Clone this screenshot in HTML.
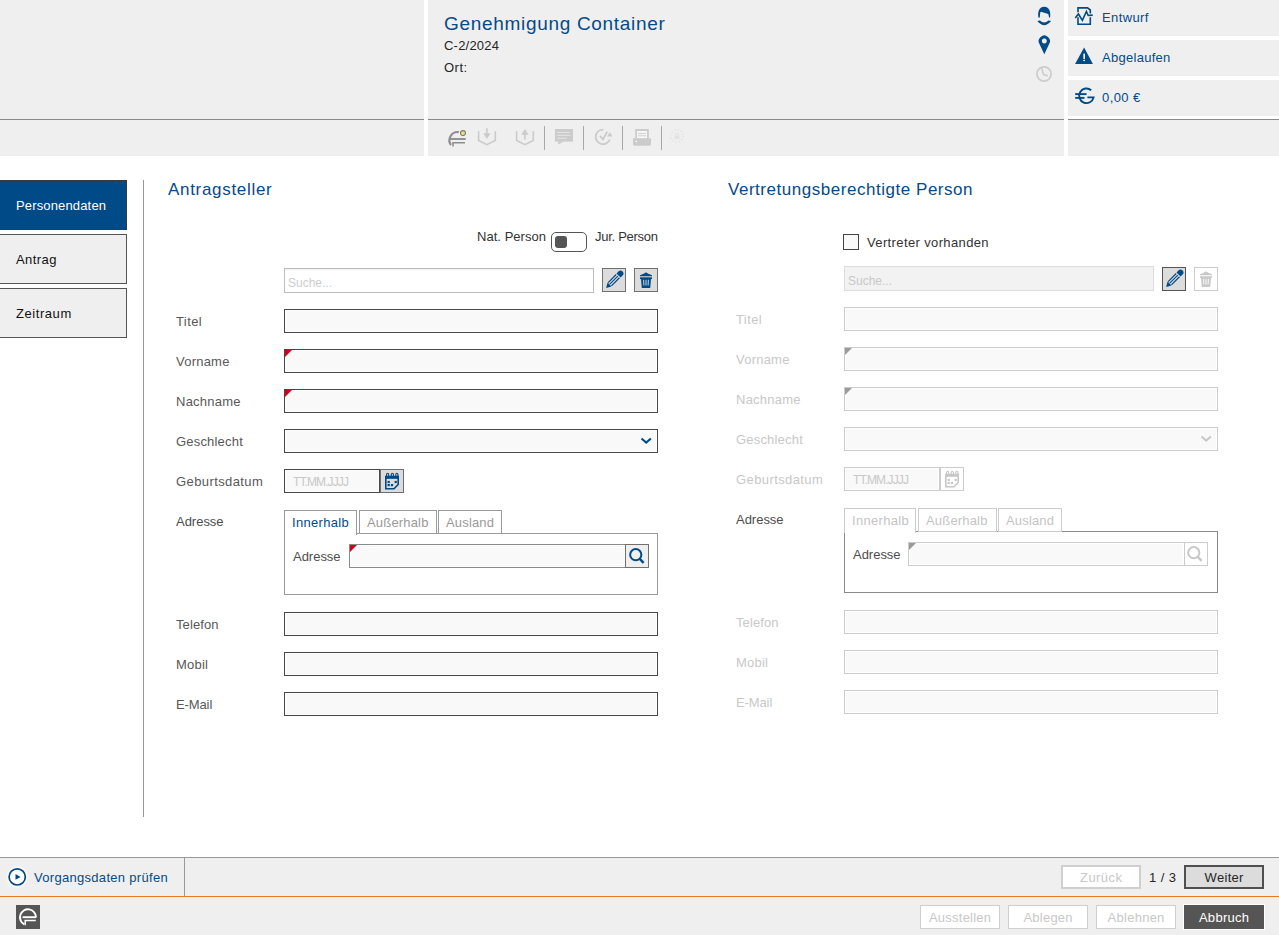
<!DOCTYPE html>
<html><head><meta charset="utf-8"><title>Genehmigung Container</title>
<style>
html,body{margin:0;padding:0;background:#fff;width:1279px;height:935px;overflow:hidden;position:relative;font-family:"Liberation Sans",sans-serif;}
.t{position:absolute;white-space:nowrap;}
.r{position:absolute;}
svg{position:absolute;overflow:visible}
</style></head><body>
<div class="r" style="left:0px;top:0px;width:424px;height:156px;background:#efefef"></div>
<div class="r" style="left:428px;top:0px;width:636px;height:156px;background:#efefef"></div>
<div class="r" style="left:1068px;top:0px;width:211px;height:36px;background:#efefef"></div>
<div class="r" style="left:1068px;top:40px;width:211px;height:36px;background:#efefef"></div>
<div class="r" style="left:1068px;top:80px;width:211px;height:36px;background:#efefef"></div>
<div class="r" style="left:1068px;top:120px;width:211px;height:36px;background:#efefef"></div>
<div class="r" style="left:0px;top:119px;width:424px;height:1px;background:#8a8a8a"></div>
<div class="r" style="left:428px;top:119px;width:636px;height:1px;background:#8a8a8a"></div>
<div class="r" style="left:1068px;top:119px;width:211px;height:1px;background:#8a8a8a"></div>
<div class="t" style="left:444px;top:13.92px;font-size:19px;line-height:19px;letter-spacing:0.691px;color:#054a89;">Genehmigung Container</div>
<div class="t" style="left:444px;top:39.00px;font-size:13px;line-height:13px;letter-spacing:0.208px;color:#262626;">C-2/2024</div>
<div class="t" style="left:444px;top:61.00px;font-size:13px;line-height:13px;letter-spacing:0.495px;color:#262626;">Ort:</div>
<div class="t" style="left:1102px;top:11.00px;font-size:13px;line-height:13px;letter-spacing:0.398px;color:#054a89;">Entwurf</div>
<div class="t" style="left:1102px;top:51.00px;font-size:13px;line-height:13px;letter-spacing:0.283px;color:#054a89;">Abgelaufen</div>
<div class="t" style="left:1102px;top:91.00px;font-size:13px;line-height:13px;letter-spacing:0.406px;color:#054a89;">0,00 €</div>
<div class="r" style="left:544px;top:126px;width:1px;height:24px;background:#a8a8a8"></div>
<div class="r" style="left:583px;top:126px;width:1px;height:24px;background:#a8a8a8"></div>
<div class="r" style="left:622px;top:126px;width:1px;height:24px;background:#a8a8a8"></div>
<div class="r" style="left:661px;top:126px;width:1px;height:24px;background:#a8a8a8"></div>
<div class="r" style="left:-1px;top:180px;width:128px;height:50px;background:#004a87;border:1px solid #3a3a3a;box-sizing:border-box"></div>
<div class="t" style="left:16px;top:199.00px;font-size:13px;line-height:13px;letter-spacing:0.151px;color:#ffffff;">Personendaten</div>
<div class="r" style="left:-1px;top:234px;width:128px;height:50px;background:#efefef;border:1px solid #555;box-sizing:border-box"></div>
<div class="t" style="left:16px;top:253.00px;font-size:13px;line-height:13px;letter-spacing:0.425px;color:#111;">Antrag</div>
<div class="r" style="left:-1px;top:288px;width:128px;height:50px;background:#efefef;border:1px solid #555;box-sizing:border-box"></div>
<div class="t" style="left:16px;top:307.00px;font-size:13px;line-height:13px;letter-spacing:0.562px;color:#111;">Zeitraum</div>
<div class="r" style="left:143px;top:180px;width:1px;height:637px;background:#999"></div>
<div class="t" style="left:168px;top:180.61px;font-size:17px;line-height:17px;letter-spacing:0.691px;color:#054a89;">Antragsteller</div>
<div class="t" style="left:728px;top:180.61px;font-size:17px;line-height:17px;letter-spacing:0.532px;color:#054a89;">Vertretungsberechtigte Person</div>
<div class="t" style="left:176px;top:315.00px;font-size:13px;line-height:13px;letter-spacing:0.406px;color:#585858;">Titel</div>
<div class="t" style="left:176px;top:355.00px;font-size:13px;line-height:13px;letter-spacing:0.224px;color:#585858;">Vorname</div>
<div class="t" style="left:176px;top:395.00px;font-size:13px;line-height:13px;letter-spacing:0.243px;color:#585858;">Nachname</div>
<div class="t" style="left:176px;top:435.00px;font-size:13px;line-height:13px;letter-spacing:0.191px;color:#585858;">Geschlecht</div>
<div class="t" style="left:176px;top:475.00px;font-size:13px;line-height:13px;letter-spacing:0.401px;color:#585858;">Geburtsdatum</div>
<div class="t" style="left:176px;top:618.00px;font-size:13px;line-height:13px;letter-spacing:0.107px;color:#585858;">Telefon</div>
<div class="t" style="left:176px;top:658.00px;font-size:13px;line-height:13px;letter-spacing:0.227px;color:#585858;">Mobil</div>
<div class="t" style="left:176px;top:698.00px;font-size:13px;line-height:13px;letter-spacing:-0.113px;color:#585858;">E-Mail</div>
<div class="t" style="left:176px;top:515.00px;font-size:13px;line-height:13px;letter-spacing:-0.021px;color:#4d4d4d;">Adresse</div>
<div class="r" style="left:284px;top:309px;width:374px;height:24px;background:#f9f9f9;border:1px solid #474747;box-sizing:border-box;box-shadow:inset 0 0 0 1px #fff"></div>
<div class="r" style="left:284px;top:349px;width:374px;height:24px;background:#f9f9f9;border:1px solid #474747;box-sizing:border-box;box-shadow:inset 0 0 0 1px #fff"></div>
<div class="r" style="left:284px;top:389px;width:374px;height:24px;background:#f9f9f9;border:1px solid #474747;box-sizing:border-box;box-shadow:inset 0 0 0 1px #fff"></div>
<div class="r" style="left:284px;top:429px;width:374px;height:24px;background:#f9f9f9;border:1px solid #474747;box-sizing:border-box;box-shadow:inset 0 0 0 1px #fff"></div>
<div class="r" style="left:284px;top:612px;width:374px;height:24px;background:#f9f9f9;border:1px solid #474747;box-sizing:border-box;box-shadow:inset 0 0 0 1px #fff"></div>
<div class="r" style="left:284px;top:652px;width:374px;height:24px;background:#f9f9f9;border:1px solid #474747;box-sizing:border-box;box-shadow:inset 0 0 0 1px #fff"></div>
<div class="r" style="left:284px;top:692px;width:374px;height:24px;background:#f9f9f9;border:1px solid #474747;box-sizing:border-box;box-shadow:inset 0 0 0 1px #fff"></div>
<div class="r" style="left:285px;top:350px;width:0;height:0;border-top:7px solid #d0021b;border-right:7px solid transparent"></div>
<div class="r" style="left:285px;top:390px;width:0;height:0;border-top:7px solid #d0021b;border-right:7px solid transparent"></div>
<div class="r" style="left:284px;top:469px;width:96px;height:24px;background:#f9f9f9;border:1px solid #474747;box-sizing:border-box;box-shadow:inset 0 0 0 1px #fff"></div>
<div class="t" style="left:293px;top:475.84px;font-size:12px;line-height:12px;color:#c8c8c8"><span style="letter-spacing:-0.9px">TT.MM.JJJJ</span></div>
<div class="r" style="left:380px;top:469px;width:24px;height:24px;background:#dcdcdc;border:1px solid #6e6e6e;box-sizing:border-box"></div>
<div class="r" style="left:284px;top:533px;width:374px;height:62px;border:1px solid #9a9a9a;box-sizing:border-box;background:#fff"></div>
<div class="r" style="left:284px;top:510px;width:73px;height:25px;border:1px solid #9a9a9a;border-bottom:none;box-sizing:border-box;background:#fff"></div>
<div class="r" style="left:359px;top:510px;width:78px;height:24px;border:1px solid #9a9a9a;box-sizing:border-box;background:#fff"></div>
<div class="r" style="left:438px;top:510px;width:64px;height:24px;border:1px solid #9a9a9a;box-sizing:border-box;background:#fff"></div>
<div class="t" style="left:292px;top:516.00px;font-size:13px;line-height:13px;letter-spacing:0.322px;color:#054a89;">Innerhalb</div>
<div class="t" style="left:367px;top:516.00px;font-size:13px;line-height:13px;letter-spacing:0.178px;color:#9a9a9a;">Außerhalb</div>
<div class="t" style="left:446px;top:516.00px;font-size:13px;line-height:13px;letter-spacing:0.164px;color:#9a9a9a;">Ausland</div>
<div class="t" style="left:293px;top:550.00px;font-size:13px;line-height:13px;letter-spacing:-0.021px;color:#4d4d4d;">Adresse</div>
<div class="r" style="left:349px;top:544px;width:277px;height:24px;background:#f9f9f9;border:1px solid #8a8a8a;box-sizing:border-box;box-shadow:inset 0 0 0 1px #fff"></div>
<div class="r" style="left:350px;top:545px;width:0;height:0;border-top:7px solid #d0021b;border-right:7px solid transparent"></div>
<div class="r" style="left:625px;top:544px;width:24px;height:24px;background:#efefef;border:1px solid #707070;box-sizing:border-box"></div>
<div class="t" style="left:736px;top:313.00px;font-size:13px;line-height:13px;letter-spacing:0.406px;color:#c8c8c8;">Titel</div>
<div class="t" style="left:736px;top:353.00px;font-size:13px;line-height:13px;letter-spacing:0.224px;color:#c8c8c8;">Vorname</div>
<div class="t" style="left:736px;top:393.00px;font-size:13px;line-height:13px;letter-spacing:0.243px;color:#c8c8c8;">Nachname</div>
<div class="t" style="left:736px;top:433.00px;font-size:13px;line-height:13px;letter-spacing:0.191px;color:#c8c8c8;">Geschlecht</div>
<div class="t" style="left:736px;top:473.00px;font-size:13px;line-height:13px;letter-spacing:0.401px;color:#c8c8c8;">Geburtsdatum</div>
<div class="t" style="left:736px;top:616.00px;font-size:13px;line-height:13px;letter-spacing:0.107px;color:#c8c8c8;">Telefon</div>
<div class="t" style="left:736px;top:656.00px;font-size:13px;line-height:13px;letter-spacing:0.227px;color:#c8c8c8;">Mobil</div>
<div class="t" style="left:736px;top:696.00px;font-size:13px;line-height:13px;letter-spacing:-0.113px;color:#c8c8c8;">E-Mail</div>
<div class="t" style="left:736px;top:513.00px;font-size:13px;line-height:13px;letter-spacing:-0.021px;color:#4d4d4d;">Adresse</div>
<div class="r" style="left:844px;top:307px;width:374px;height:24px;background:#f9f9f9;border:1px solid #cccccc;box-sizing:border-box;box-shadow:inset 0 0 0 1px #fff"></div>
<div class="r" style="left:844px;top:347px;width:374px;height:24px;background:#f9f9f9;border:1px solid #cccccc;box-sizing:border-box;box-shadow:inset 0 0 0 1px #fff"></div>
<div class="r" style="left:844px;top:387px;width:374px;height:24px;background:#f9f9f9;border:1px solid #cccccc;box-sizing:border-box;box-shadow:inset 0 0 0 1px #fff"></div>
<div class="r" style="left:844px;top:427px;width:374px;height:24px;background:#f9f9f9;border:1px solid #cccccc;box-sizing:border-box;box-shadow:inset 0 0 0 1px #fff"></div>
<div class="r" style="left:844px;top:610px;width:374px;height:24px;background:#f9f9f9;border:1px solid #cccccc;box-sizing:border-box;box-shadow:inset 0 0 0 1px #fff"></div>
<div class="r" style="left:844px;top:650px;width:374px;height:24px;background:#f9f9f9;border:1px solid #cccccc;box-sizing:border-box;box-shadow:inset 0 0 0 1px #fff"></div>
<div class="r" style="left:844px;top:690px;width:374px;height:24px;background:#f9f9f9;border:1px solid #cccccc;box-sizing:border-box;box-shadow:inset 0 0 0 1px #fff"></div>
<div class="r" style="left:845px;top:348px;width:0;height:0;border-top:7px solid #9a9a9a;border-right:7px solid transparent"></div>
<div class="r" style="left:845px;top:388px;width:0;height:0;border-top:7px solid #9a9a9a;border-right:7px solid transparent"></div>
<div class="r" style="left:844px;top:467px;width:96px;height:24px;background:#f9f9f9;border:1px solid #cccccc;box-sizing:border-box;box-shadow:inset 0 0 0 1px #fff"></div>
<div class="t" style="left:853px;top:473.84px;font-size:12px;line-height:12px;color:#c8c8c8"><span style="letter-spacing:-0.9px">TT.MM.JJJJ</span></div>
<div class="r" style="left:940px;top:467px;width:24px;height:24px;background:#fff;border:1px solid #cccccc;box-sizing:border-box"></div>
<div class="r" style="left:844px;top:531px;width:374px;height:62px;border:1px solid #8a8a8a;box-sizing:border-box;background:#fff"></div>
<div class="r" style="left:844px;top:508px;width:72px;height:25px;border:1px solid #cccccc;border-bottom:none;box-sizing:border-box;background:#fff"></div>
<div class="r" style="left:918px;top:508px;width:79px;height:24px;border:1px solid #cccccc;box-sizing:border-box;background:#fff"></div>
<div class="r" style="left:998px;top:508px;width:64px;height:24px;border:1px solid #cccccc;box-sizing:border-box;background:#fff"></div>
<div class="t" style="left:852px;top:514.00px;font-size:13px;line-height:13px;letter-spacing:0.322px;color:#c4c4c4;">Innerhalb</div>
<div class="t" style="left:926px;top:514.00px;font-size:13px;line-height:13px;letter-spacing:0.178px;color:#c4c4c4;">Außerhalb</div>
<div class="t" style="left:1006px;top:514.00px;font-size:13px;line-height:13px;letter-spacing:0.164px;color:#c4c4c4;">Ausland</div>
<div class="t" style="left:853px;top:548.00px;font-size:13px;line-height:13px;letter-spacing:-0.021px;color:#4d4d4d;">Adresse</div>
<div class="r" style="left:908px;top:542px;width:277px;height:24px;background:#f9f9f9;border:1px solid #cccccc;box-sizing:border-box;box-shadow:inset 0 0 0 1px #fff"></div>
<div class="r" style="left:909px;top:543px;width:0;height:0;border-top:7px solid #9a9a9a;border-right:7px solid transparent"></div>
<div class="r" style="left:1184px;top:542px;width:24px;height:24px;background:#fff;border:1px solid #cccccc;box-sizing:border-box"></div>
<div class="t" style="left:477px;top:230.00px;font-size:13px;line-height:13px;letter-spacing:0.036px;color:#333;">Nat. Person</div>
<div class="t" style="left:595px;top:230.00px;font-size:13px;line-height:13px;letter-spacing:-0.280px;color:#333;">Jur. Person</div>
<div class="r" style="left:551px;top:232px;width:36px;height:20px;border:1px solid #555;border-radius:5px;box-sizing:border-box;background:#fff"></div>
<div class="r" style="left:555px;top:236px;width:12px;height:12px;background:#555;border-radius:3px"></div>
<div class="r" style="left:284px;top:268px;width:310px;height:25px;background:#fff;border:1px solid #bdbdbd;box-sizing:border-box;box-shadow:inset 0 2px 2px -1px rgba(0,0,0,0.07)"></div>
<div class="t" style="left:288px;top:276.84px;font-size:12px;line-height:12px;color:#cdcdcd">Suche...</div>
<div class="r" style="left:602px;top:268px;width:24px;height:24px;background:#dcdcdc;border:1px solid #707070;box-sizing:border-box"></div>
<div class="r" style="left:634px;top:268px;width:24px;height:24px;background:#dcdcdc;border:1px solid #707070;box-sizing:border-box"></div>
<div class="r" style="left:843px;top:234px;width:16px;height:16px;border:1px solid #444;box-sizing:border-box;background:#f9f9f9"></div>
<div class="t" style="left:867px;top:236.00px;font-size:13px;line-height:13px;letter-spacing:0.370px;color:#333;">Vertreter vorhanden</div>
<div class="r" style="left:844px;top:266px;width:310px;height:25px;background:#f2f2f2;border:1px solid #dddddd;box-sizing:border-box"></div>
<div class="t" style="left:848px;top:274.84px;font-size:12px;line-height:12px;color:#c8c8c8">Suche...</div>
<div class="r" style="left:1162px;top:267px;width:24px;height:24px;background:#dcdcdc;border:1px solid #555;box-sizing:border-box"></div>
<div class="r" style="left:1194px;top:267px;width:24px;height:24px;background:#fff;border:1px solid #cccccc;box-sizing:border-box"></div>
<div class="r" style="left:0px;top:857px;width:1279px;height:78px;background:#efefef"></div>
<div class="r" style="left:0px;top:857px;width:1279px;height:1px;background:#999"></div>
<div class="r" style="left:0px;top:896px;width:1279px;height:1px;background:#e8782a"></div>
<div class="r" style="left:184px;top:858px;width:1px;height:38px;background:#999"></div>
<div class="t" style="left:34px;top:871.00px;font-size:13px;line-height:13px;letter-spacing:0.301px;color:#054a89;">Vorgangsdaten prüfen</div>
<div class="r" style="left:16px;top:905px;width:24px;height:24px;background:#555"></div>
<div class="r" style="left:1061px;top:865px;width:80px;height:24px;background:#fff;border:2px solid #cfcfcf;box-sizing:border-box"></div>
<div class="t" style="left:1080.04px;top:871.00px;font-size:13px;line-height:13px;letter-spacing:0.438px;color:#c8c8c8;">Zurück</div>
<div class="t" style="left:1149px;top:871.00px;font-size:13px;line-height:13px;letter-spacing:0.414px;color:#262626;">1 / 3</div>
<div class="r" style="left:1184px;top:865px;width:80px;height:24px;background:#dcdcdc;border:2px solid #505050;box-sizing:border-box"></div>
<div class="t" style="left:1204.55px;top:871.00px;font-size:13px;line-height:13px;letter-spacing:0.316px;color:#262626;">Weiter</div>
<div class="r" style="left:920px;top:905px;width:80px;height:24px;background:#fff;border:1px solid #cfcfcf;box-sizing:border-box"></div>
<div class="t" style="left:928.97px;top:911.00px;font-size:13px;line-height:13px;letter-spacing:0.229px;color:#c8c8c8;">Ausstellen</div>
<div class="r" style="left:1008px;top:905px;width:80px;height:24px;background:#fff;border:1px solid #cfcfcf;box-sizing:border-box"></div>
<div class="t" style="left:1023.41px;top:911.00px;font-size:13px;line-height:13px;letter-spacing:0.240px;color:#c8c8c8;">Ablegen</div>
<div class="r" style="left:1096px;top:905px;width:80px;height:24px;background:#fff;border:1px solid #cfcfcf;box-sizing:border-box"></div>
<div class="t" style="left:1107.62px;top:911.00px;font-size:13px;line-height:13px;letter-spacing:0.257px;color:#c8c8c8;">Ablehnen</div>
<div class="r" style="left:1184px;top:905px;width:80px;height:24px;background:#555;box-shadow:0 0 0 1px #fff;box-sizing:border-box"></div>
<div class="t" style="left:1198.9px;top:911.00px;font-size:13px;line-height:13px;letter-spacing:0.294px;color:#ffffff;">Abbruch</div>
<svg width="1279" height="935" style="left:0;top:0" viewBox="0 0 1279 935"><g transform="translate(606.1,287.9) rotate(-45)"><polygon points="0,0 4.8,-2.7 4.8,2.7" fill="#004a87"/><line x1="5.2" y1="-2.3" x2="16.6" y2="-2.3" stroke="#004a87" stroke-width="1.2"/><line x1="5.2" y1="2.3" x2="16.6" y2="2.3" stroke="#004a87" stroke-width="1.2"/><line x1="5.2" y1="0" x2="16.6" y2="0" stroke="#004a87" stroke-width="1.1"/><path d="M17.6,-2.9 H20.4 A2.9,2.9 0 0 1 20.4,2.9 H17.6 Z" fill="#004a87"/></g><g fill="#004a87"><path d="M640,275.3 L644.2,273.6 Q646,271.3 647.8,273.6 L652,275.3 L652,276.2 L640,276.2 Z"/><rect x="640" y="277.3" width="12" height="1.8"/><path d="M641,279 L651,279 L650.2,288 L641.8,288 Z"/></g><g stroke="#e8e8e8" stroke-width="0.9"><line x1="643.6" y1="279.8" x2="643.9" y2="285.5"/><line x1="646" y1="279.8" x2="646" y2="285.5"/><line x1="648.4" y1="279.8" x2="648.1" y2="285.5"/></g><g transform="translate(1166.1,286.9) rotate(-45)"><polygon points="0,0 4.8,-2.7 4.8,2.7" fill="#004a87"/><line x1="5.2" y1="-2.3" x2="16.6" y2="-2.3" stroke="#004a87" stroke-width="1.2"/><line x1="5.2" y1="2.3" x2="16.6" y2="2.3" stroke="#004a87" stroke-width="1.2"/><line x1="5.2" y1="0" x2="16.6" y2="0" stroke="#004a87" stroke-width="1.1"/><path d="M17.6,-2.9 H20.4 A2.9,2.9 0 0 1 20.4,2.9 H17.6 Z" fill="#004a87"/></g><g fill="#c8c8c8"><path d="M1200,274.3 L1204.2,272.6 Q1206,270.3 1207.8,272.6 L1212,274.3 L1212,275.2 L1200,275.2 Z"/><rect x="1200" y="276.3" width="12" height="1.8"/><path d="M1201,278 L1211,278 L1210.2,287 L1201.8,287 Z"/></g><g stroke="#fff" stroke-width="0.9"><line x1="1203.6" y1="278.8" x2="1203.9" y2="284.5"/><line x1="1206" y1="278.8" x2="1206" y2="284.5"/><line x1="1208.4" y1="278.8" x2="1208.1" y2="284.5"/></g><g fill="none" stroke="#004a87" stroke-width="1.6"><path d="M385.8,476.5 H398.2 V484.5 L394,488.7 H385.8 Z"/></g><rect x="385" y="476.2" width="14" height="2.6" fill="#004a87"/><g stroke="#004a87" stroke-width="1.1" fill="none"><rect x="386.6" y="473.3" width="2.1" height="4.6" rx="1.05"/><rect x="391.3" y="473.3" width="2.1" height="4.6" rx="1.05"/><rect x="395.8" y="473.3" width="2.1" height="4.6" rx="1.05"/></g><g fill="#004a87"><rect x="387.6" y="480.9" width="2.2" height="2.2"/><rect x="394.6" y="480.9" width="2.2" height="2.2"/><rect x="387.6" y="484" width="2.2" height="2.2"/><rect x="390.9" y="484" width="2.2" height="2.2"/></g><g fill="none" stroke="#c8c8c8" stroke-width="1.6"><path d="M945.8,474.5 H958.2 V482.5 L954,486.7 H945.8 Z"/></g><rect x="945" y="474.2" width="14" height="2.6" fill="#c8c8c8"/><g stroke="#c8c8c8" stroke-width="1.1" fill="none"><rect x="946.6" y="471.3" width="2.1" height="4.6" rx="1.05"/><rect x="951.3" y="471.3" width="2.1" height="4.6" rx="1.05"/><rect x="955.8" y="471.3" width="2.1" height="4.6" rx="1.05"/></g><g fill="#c8c8c8"><rect x="947.6" y="478.9" width="2.2" height="2.2"/><rect x="954.6" y="478.9" width="2.2" height="2.2"/><rect x="947.6" y="482" width="2.2" height="2.2"/><rect x="950.9" y="482" width="2.2" height="2.2"/></g><circle cx="635.75" cy="554.7" r="5.6" fill="none" stroke="#004a87" stroke-width="2"/><line x1="639.6" y1="558.6" x2="643.6" y2="562.8" stroke="#004a87" stroke-width="2.4"/><circle cx="1193.75" cy="552.7" r="5.6" fill="none" stroke="#c8c8c8" stroke-width="2"/><line x1="1197.6" y1="556.6" x2="1201.6" y2="560.8" stroke="#c8c8c8" stroke-width="2.4"/><polyline points="641.5,438.40000000000003 646.2,442.6 650.9000000000001,438.40000000000003" fill="none" stroke="#004a87" stroke-width="2"/><polyline points="1201.5,436.40000000000003 1206.2,440.6 1210.9,436.40000000000003" fill="none" stroke="#c8c8c8" stroke-width="2"/><path fill="#004a87" d="M1038.4,17.5 C1037.4,11 1039.5,6.8 1044.2,6.8 C1048.9,6.8 1051,11 1050.1,17.5 L1049.1,17.5 L1048.3,13.9 L1041,11.7 L1040.2,12.4 L1039.8,17.5 Z"/><path fill="#004a87" d="M1037.3,20.9 L1039.9,20.5 Q1044.2,24.6 1048.5,20.5 L1051.1,20.9 Q1047,25.2 1044.2,25.2 Q1041.4,25.2 1037.3,20.9 Z"/><path fill="#004a87" fill-rule="evenodd" d="M1044.3,54.2 L1039.6,44.2 A5.6,5.6 0 1 1 1049,44.2 Z M1044.3,38.6 a2.5,2.5 0 1 0 0.01,0 Z"/><circle cx="1044" cy="74" r="7.1" fill="none" stroke="#cdcdcd" stroke-width="1.8"/><polyline points="1041.6,67.5 1043.6,74.6 1047.8,75.8" fill="none" stroke="#cdcdcd" stroke-width="1.6"/><g fill="none" stroke="#004a87" stroke-width="1.6"><path d="M1078,12.2 V7.9 H1087.5 L1090.3,10 V13.6"/><path d="M1078,17.3 V24.3 H1090.3 V17.3"/><polyline points="1075.3,17.9 1078.4,14 1082.4,20.4 1086.4,11.4 1088.2,15.5 1092.7,15.1"/></g><path fill="#004a87" d="M1084.1,47.6 L1092.9,63.9 H1075.1 Z"/><rect x="1083.3" y="53.6" width="1.7" height="5.3" fill="#f0f0f0"/><rect x="1083.3" y="59.8" width="1.7" height="1.3" fill="#f0f0f0"/><g fill="none" stroke="#004a87" stroke-width="1.9"><path d="M1091.2,90.2 A7.3,7.3 0 1 0 1093.6,97.35 H1087.4"/><path d="M1075.2,94.1 H1086.5"/><path d="M1075.2,97.9 H1084.5"/></g><g fill="none" stroke="#8e8e8e"><path d="M1050.3,0" /><path d="M458.8,132.1 A8.2,8.2 0 0 0 451,145" stroke-width="2.2"/><path d="M450,139 H465.8" stroke-width="1.9"/><path d="M453,146.6 V142.8 H465" stroke-width="1.5"/></g><circle cx="463" cy="133.1" r="3.3" fill="#fff"/><circle cx="463" cy="133.1" r="2.5" fill="#f4dd7f" stroke="#7a7a7a" stroke-width="1.1"/><g fill="none" stroke="#cbcbcb" stroke-width="1.6"><polyline points="478.6,131.2 478.6,140.4 486.9,144.6 495.3,140.4 495.3,131.2"/><line x1="486.9" y1="128.2" x2="486.9" y2="134"/><polyline points="516.6,131.2 516.6,140.4 524.9,144.6 533.3,140.4 533.3,131.2"/><line x1="524.9" y1="134.5" x2="524.9" y2="139.5"/></g><polygon points="483.3,133.2 490.6,133.2 486.9,138.9" fill="#cbcbcb"/><polygon points="521.2,134.8 528.6,134.8 524.9,129" fill="#cbcbcb"/><rect x="555" y="129" width="18" height="12.6" fill="#cbcbcb"/><polygon points="558.2,141.5 564,141.5 558.2,144.6" fill="#cbcbcb"/><g stroke="#e9e9e9" stroke-width="0.9"><line x1="557" y1="132.4" x2="570" y2="132.4"/><line x1="557" y1="135.3" x2="570.5" y2="135.3"/><line x1="557" y1="138.2" x2="567" y2="138.2"/></g><g fill="none" stroke="#cbcbcb" stroke-width="1.8"><path d="M603.5,129.6 A7.3,7.3 0 1 0 609.8,139.5"/><polyline points="600,135.8 603,139.4 607.2,131.6"/></g><polygon points="607,136.5 612.6,136.5 609.8,132.3" fill="#cbcbcb"/><rect x="635.3" y="129" width="13.5" height="9.5" fill="#cbcbcb"/><rect x="637" y="131" width="10" height="7" fill="#f7f7f7"/><g stroke="#cbcbcb" stroke-width="0.9"><line x1="638" y1="133.5" x2="646" y2="133.5"/><line x1="638" y1="135.8" x2="646" y2="135.8"/></g><path d="M633,138.3 H651 V144 Q651,145.8 649.2,145.8 H634.8 Q633,145.8 633,144 Z" fill="#cbcbcb"/><circle cx="636.3" cy="141.5" r="0.8" fill="#fff"/><circle cx="677" cy="136" r="6.3" fill="none" stroke="#dedede" stroke-width="1.3" stroke-dasharray="1.2 2.1"/><rect x="674.6" y="135.5" width="4.8" height="3.6" fill="#e2e2e2"/><path d="M675.6,135.6 V134.4 A1.4,1.4 0 0 1 678.4,134.4 V135.6" fill="none" stroke="#e2e2e2" stroke-width="0.9"/><circle cx="17.2" cy="876.9" r="10.8" fill="#fff" opacity="0.55"/><circle cx="17.2" cy="876.9" r="8.1" fill="#fff" stroke="#004a87" stroke-width="1.7"/><polygon points="15.5,874 20.6,876.9 15.5,879.8" fill="#004a87"/><g fill="none" stroke="#fff"><path d="M36,917.2 A8,8 0 1 0 24.3,924.4" stroke-width="1.9"/><path d="M22.6,917.2 H36.2" stroke-width="1.9"/><path d="M25.2,925.2 V920.6 H35.8" stroke-width="1.5"/></g></svg>

</body></html>
